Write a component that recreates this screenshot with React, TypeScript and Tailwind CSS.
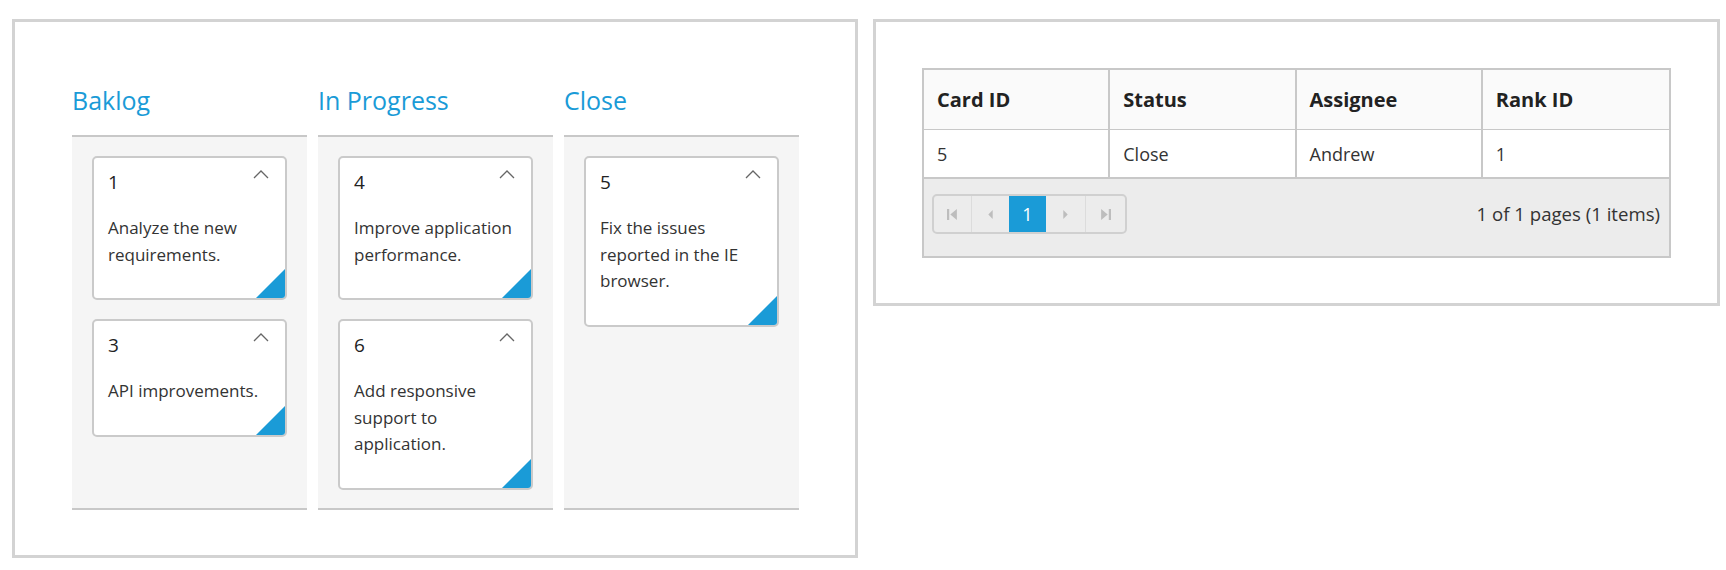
import React from "react";

type Card = { id: number; text: string };

const columns: { title: string; cards: Card[] }[] = [
  {
    title: "Baklog",
    cards: [
      { id: 1, text: "Analyze the new requirements." },
      { id: 3, text: "API improvements." },
    ],
  },
  {
    title: "In Progress",
    cards: [
      { id: 4, text: "Improve application performance." },
      { id: 6, text: "Add responsive support to application." },
    ],
  },
  {
    title: "Close",
    cards: [{ id: 5, text: "Fix the issues reported in the IE browser." }],
  },
];

function KanbanCard({ card }: { card: Card }) {
  return (
    <div className="relative overflow-hidden rounded-[5px] border-2 border-[#cacaca] bg-white pl-[14px] pr-[10px] pt-[11px] pb-[30px]">
      {/* header: id + collapse chevron */}
      <div className="flex items-start justify-between">
        <span className="text-[19px] leading-[26px] text-[#222]">{card.id}</span>
        <svg className="mr-[6px] mt-[1px]" width="16" height="9" viewBox="0 0 16 9" fill="none" stroke="#666" strokeWidth="1.3">
          <path d="M1 8L8 1l7 7" />
        </svg>
      </div>
      <p className="mt-[20px] text-[17px] leading-[26.5px] text-[#333]">{card.text}</p>

      {/* corner marker */}
      <svg className="absolute bottom-0 right-0" width="29" height="29" viewBox="0 0 29 29">
        <polygon points="29,0 29,29 0,29" fill="#1a9bd7" />
      </svg>
    </div>
  );
}

function Kanban() {
  return (
    <div className="w-[846px] border-[3px] border-[#d3d3d3] pl-[57px] pr-[56px] pt-[46px] pb-[45px]">
      <div className="grid grid-cols-[235px_235px_235px] gap-x-[11px]">
        {columns.map((col) => (
          <div key={col.title} className="h-[67px] pt-[16px] text-[25px] leading-[32px] text-[#1a9bd7]">
            {col.title}
          </div>
        ))}
        {columns.map((col) => (
          <div
            key={col.title + "-body"}
            className="flex flex-col gap-[19px] border-y-2 border-[#c8c8c8] bg-[#f5f5f5] px-[20px] pt-[19px] pb-[18px]"
          >
            {col.cards.map((c) => (
              <KanbanCard key={c.id} card={c} />
            ))}
          </div>
        ))}
      </div>
    </div>
  );
}

function PagerIcon({ kind }: { kind: "first" | "prev" | "next" | "last" }) {
  return (
    <svg width="11" height="11" viewBox="0 0 10 10" fill="#bdbdbd">
      {kind === "first" && (
        <>
          <rect x="0" y="0" width="2" height="10" />
          <polygon points="9,0 3,5 9,10" />
        </>
      )}
      {kind === "prev" && <polygon points="7,1 3,5 7,9" />}
      {kind === "next" && <polygon points="3,1 7,5 3,9" />}
      {kind === "last" && (
        <>
          <polygon points="1,0 7,5 1,10" />
          <rect x="8" y="0" width="2" height="10" />
        </>
      )}
    </svg>
  );
}

function Grid() {
  const heads = ["Card ID", "Status", "Assignee", "Rank ID"];
  const row = ["5", "Close", "Andrew", "1"];
  return (
    <div className="w-[847px] border-[3px] border-[#d3d3d3] px-[46px] pt-[46px] pb-[45px]">
      <div className="border-2 border-[#c8c8c8]">
        {/* header row */}
        <div className="grid grid-cols-4 border-b border-[#c8c8c8] bg-[#fafafa]">
          {heads.map((h, i) => (
            <div
              key={h}
              className={`h-[59px] pl-[13px] text-[20px] font-bold leading-[59px] text-[#222] ${i < 3 ? "border-r-2 border-[#c8c8c8]" : ""}`}
            >
              {h}
            </div>
          ))}
        </div>

        {/* data row */}
        <div className="grid grid-cols-4 border-b-2 border-[#c8c8c8] bg-white">
          {row.map((v, i) => (
            <div
              key={i}
              className={`h-[47px] pl-[13px] pt-[1px] text-[18px] leading-[46px] text-[#333] ${i < 3 ? "border-r-2 border-[#c8c8c8]" : ""}`}
            >
              {v}
            </div>
          ))}
        </div>

        {/* pager */}
        <div className="flex items-center justify-between bg-[#ececec] pl-[8px] pr-[9px] pt-[15px] pb-[22px]">
          <div className="flex h-[40px] w-[195px] overflow-hidden rounded-[5px] border-2 border-[#d0d0d0]">
            <div className="flex w-[37px] items-center justify-center">
              <PagerIcon kind="first" />
            </div>
            <div className="flex w-[38px] items-center justify-center border-l border-[#dcdcdc]">
              <PagerIcon kind="prev" />
            </div>
            <div className="flex w-[37px] items-center justify-center bg-[#1a9bd7] text-[18px] text-white">1</div>
            <div className="flex w-[40px] items-center justify-center border-r border-[#dcdcdc]">
              <PagerIcon kind="next" />
            </div>
            <div className="flex flex-1 items-center justify-center">
              <PagerIcon kind="last" />
            </div>
          </div>
          <span className="text-[18.6px] text-[#333]">1 of 1 pages (1 items)</span>
        </div>
      </div>
    </div>
  );
}

export default function App() {
  return (
    <div className="flex min-h-[570px] w-[1726px] items-start gap-[15px] bg-white pl-[12px] pt-[19px] font-['Open_Sans',sans-serif]">
      <Kanban />
      <Grid />
    </div>
  );
}
